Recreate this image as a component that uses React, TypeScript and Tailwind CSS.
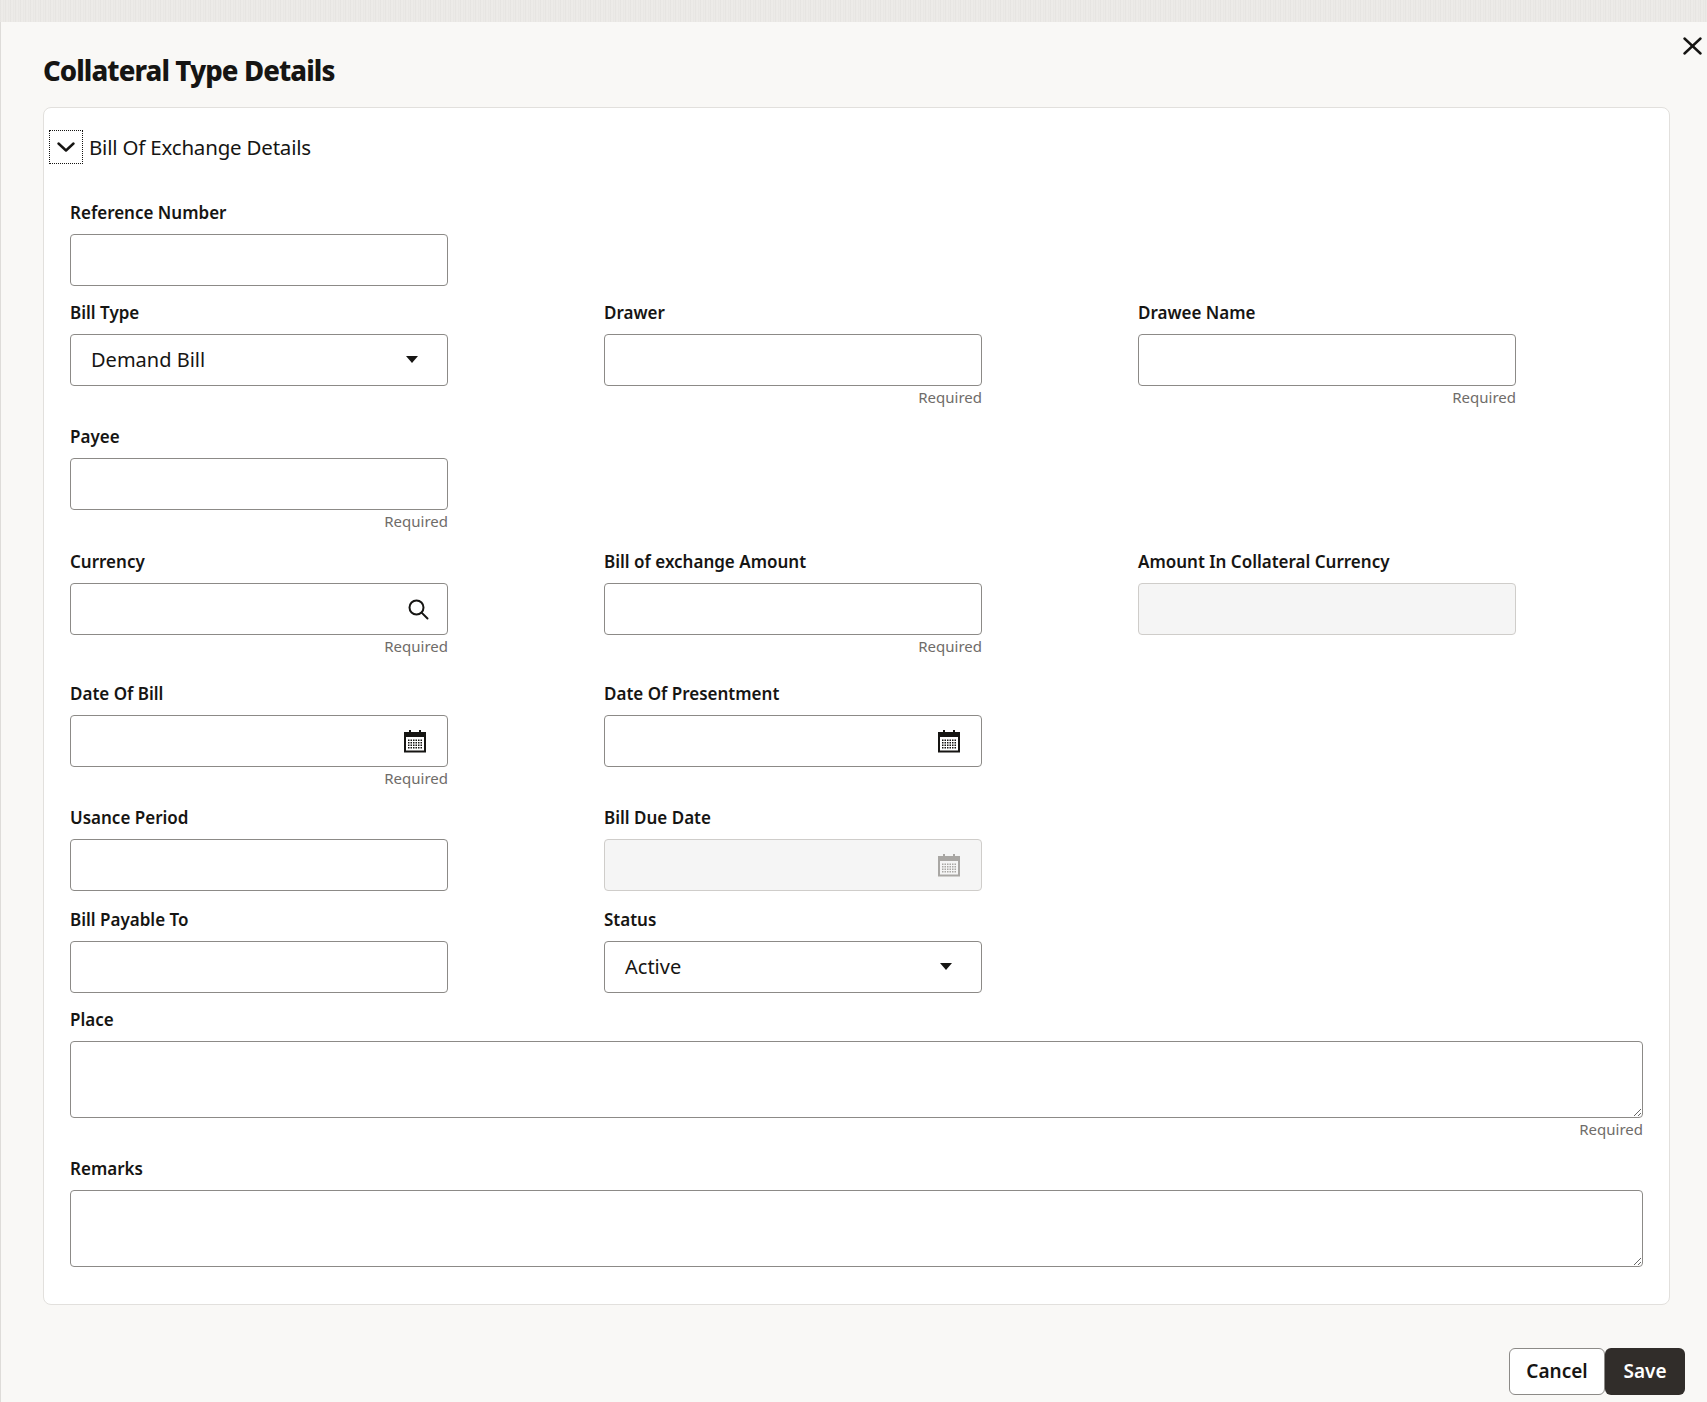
import React from "react";

type Field = {
	label: string;
	required?: boolean;
	kind?: "text" | "select" | "search" | "date" | "disabled" | "disabledDate";
	value?: string;
};

const SearchIcon = () => (
	<svg width="21" height="21" viewBox="0 0 21 21" fill="none" stroke="currentColor" strokeWidth="2">
		<circle cx="8.5" cy="8.5" r="7" />
		<line x1="13.6" y1="13.6" x2="19.5" y2="19.5" strokeLinecap="round" />
	</svg>
);

const CalendarIcon = () => {
	const dots: React.ReactNode[] = [];
	for (let r = 0; r < 4; r++) {
		for (let c = 0; c < 6; c++) {
			dots.push(<rect key={`${r}-${c}`} x={5 + c * 2.5} y={10.5 + r * 2.5} width="1.5" height="1.5" fill="currentColor" />);
		}
	}
	return (
		<svg width="24" height="24" viewBox="0 0 24 24">
			<rect x="2" y="4" width="20" height="18.5" fill="none" stroke="currentColor" strokeWidth="2" />
			<rect x="2" y="4" width="20" height="4" fill="currentColor" />
			<rect x="6" y="1" width="2" height="5" fill="currentColor" />
			<rect x="16" y="1" width="2" height="5" fill="currentColor" />
			{dots}
		</svg>
	);
};

const Caret = () => (
	<svg width="12" height="7" viewBox="0 0 12 7">
		<path d="M0 0 L12 0 L6 7 Z" fill="currentColor" />
	</svg>
);

const FormField = ({ label, required, kind = "text", value }: Field) => {
	const disabled = kind === "disabled" || kind === "disabledDate";
	return (
		<div className="flex flex-col">
			<label className="h-[22px] text-[17px] leading-[22px] font-semibold mb-[10px] whitespace-nowrap">{label}</label>
			<div
				className={
					disabled
						? "relative h-[52px] rounded-[4px] border border-[#cfcdca] bg-[#f5f5f5] flex items-center"
						: "relative h-[52px] rounded-[4px] border border-[#8c8a87] bg-white flex items-center"
				}
			>
				{value && <span className="pl-[20px] text-[20px] text-[#161513]">{value}</span>}
				{kind === "select" && (
					<span className="absolute right-[29px] top-[21px] text-[#161513]"><Caret /></span>
				)}
				{kind === "search" && (
					<span className="absolute right-[18px] top-[15px] text-[#161513]"><SearchIcon /></span>
				)}
				{kind === "date" && (
					<span className="absolute right-[20px] top-[13px] text-[#161513]"><CalendarIcon /></span>
				)}
				{kind === "disabledDate" && (
					<span className="absolute right-[20px] top-[13px] text-[#a9a7a4]"><CalendarIcon /></span>
				)}
			</div>
			{required && (
				<div className="h-[22px] text-right text-[15px] leading-[22px] text-[#6f6c69]">Required</div>
			)}
		</div>
	);
};

const Row = ({ children, extra }: { children: React.ReactNode; extra?: string }) => (
	<div className={`grid grid-cols-[378px_378px_378px] gap-x-[156px] ${extra ?? ""}`}>{children}</div>
);

const AreaField = ({ label, required }: { label: string; required?: boolean }) => (
	<div className="flex flex-col">
		<label className="h-[22px] text-[17px] leading-[22px] font-semibold mb-[10px]">{label}</label>
		<textarea className="h-[77px] w-full rounded-[4px] border border-[#8c8a87] bg-white resize-y outline-none block" />
		{required && (
			<div className="h-[22px] text-right text-[15px] leading-[22px] text-[#6f6c69]">Required</div>
		)}
	</div>
);

export default function App() {
	return (
		<div className="min-h-[1402px] bg-[#f9f8f6] font-['Noto_Sans',sans-serif] text-[#161513] flex flex-col">
			<div className="h-[22px] bg-[repeating-linear-gradient(90deg,#e4e2df_0px,#efedea_2px,#e7e5e2_4px,#f1efec_5px)]" />
			<div className="relative flex-1 flex flex-col border-l border-[#dedcd9] pl-[42px] pr-[37px]">
				<button className="absolute right-[5px] top-[15px] text-[#161513]" aria-label="Close">
					<svg width="19" height="18" viewBox="0 0 19 18" stroke="currentColor" strokeWidth="2.4" strokeLinecap="round">
						<line x1="1.5" y1="1.5" x2="17.5" y2="16.5" />
						<line x1="17.5" y1="1.5" x2="1.5" y2="16.5" />
					</svg>
				</button>

				<h1 className="mt-[31px] h-[36px] text-[27.5px] leading-[36px] font-extrabold tracking-[-0.9px]">Collateral Type Details</h1>

				<div className="mt-[18px] rounded-lg border border-[#e2e0dd] bg-white pt-[22px] px-[5px] pb-[37px]">
					<div className="flex items-center gap-[6px]">
						<div className="w-[34px] h-[34px] border border-dotted border-[#161513] flex items-center justify-center">
							<svg width="18" height="10" viewBox="0 0 18 10" fill="none" stroke="currentColor" strokeWidth="2.4" strokeLinecap="round" strokeLinejoin="round">
								<polyline points="1.5,1.5 9,8.5 16.5,1.5" />
							</svg>
						</div>
						<span className="text-[20.5px] leading-[28px] tracking-[-0.2px]">Bill Of Exchange Details</span>
					</div>

					<div className="mt-[38px] px-[21px] flex flex-col gap-[18px]">
						<Row extra="-mb-[2px]">
							<FormField label="Reference Number" />
						</Row>
						<Row>
							<FormField label="Bill Type" kind="select" value="Demand Bill" />
							<FormField label="Drawer" required />
							<FormField label="Drawee Name" required />
						</Row>
						<Row extra="mb-[1px]">
							<FormField label="Payee" required />
						</Row>
						<Row extra="mb-[8px]">
							<FormField label="Currency" kind="search" required />
							<FormField label="Bill of exchange Amount" required />
							<FormField label="Amount In Collateral Currency" kind="disabled" />
						</Row>
						<Row>
							<FormField label="Date Of Bill" kind="date" required />
							<FormField label="Date Of Presentment" kind="date" />
						</Row>
						<Row>
							<FormField label="Usance Period" />
							<FormField label="Bill Due Date" kind="disabledDate" />
						</Row>
						<Row extra="-mb-[2px]">
							<FormField label="Bill Payable To" />
							<FormField label="Status" kind="select" value="Active" />
						</Row>
						<AreaField label="Place" required />
						<AreaField label="Remarks" />
					</div>
				</div>

				<div className="mt-[43px] mb-[8px] flex justify-end -mr-[15px]">
					<button className="h-[47px] w-[96px] rounded-[6px] border border-[#8c8a87] bg-white text-[19px] font-semibold text-[#161513]">Cancel</button>
					<button className="h-[47px] w-[80px] rounded-[6px] bg-[#312d2a] text-[19px] font-semibold text-white">Save</button>
				</div>
			</div>
		</div>
	);
}
